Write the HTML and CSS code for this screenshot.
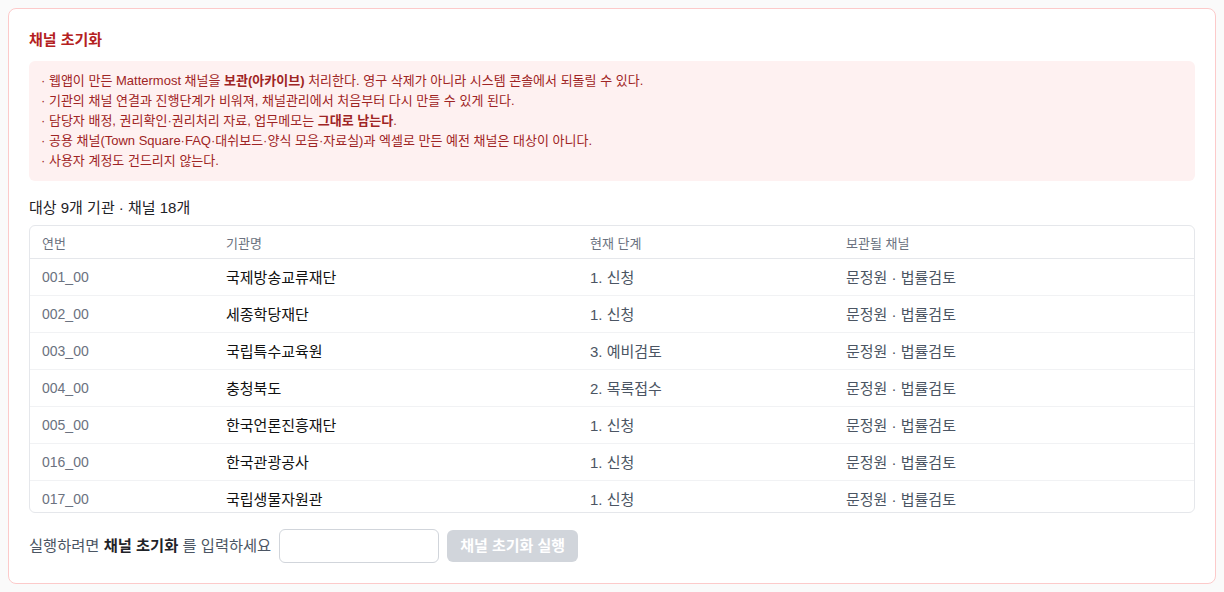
FILE: index.html
```html
<!DOCTYPE html>
<html lang="ko">
    <head>
        <meta charset="UTF-8">
        <meta name="viewport" content="width=device-width, initial-scale=1.0">
        <title>채널 초기화</title>
        <link rel="stylesheet" href="styles.css">
    </head>
    <body>
        <section class="reset-card">
            <h2 class="reset-title">채널 초기화</h2>

            <ul class="notice">
                <li>웹앱이 만든 Mattermost 채널을 <b>보관(아카이브)</b> 처리한다. 영구 삭제가 아니라 시스템 콘솔에서 되돌릴 수 있다.</li>
                <li>기관의 채널 연결과 진행단계가 비워져, 채널관리에서 처음부터 다시 만들 수 있게 된다.</li>
                <li>담당자 배정, 권리확인·권리처리 자료, 업무메모는 <b>그대로 남는다</b>.</li>
                <li>공용 채널(Town Square·FAQ·대쉬보드·양식 모음·자료실)과 엑셀로 만든 예전 채널은 대상이 아니다.</li>
                <li>사용자 계정도 건드리지 않는다.</li>
            </ul>

            <div class="summary">대상 9개 기관 · 채널 18개</div>

            <div class="table-wrap">
                <table class="targets">
                    <colgroup>
                        <col class="c-no">
                        <col class="c-org">
                        <col class="c-stage">
                        <col>
                    </colgroup>
                    <thead>
                        <tr>
                            <th>연번</th>
                            <th>기관명</th>
                            <th>현재 단계</th>
                            <th>보관될 채널</th>
                        </tr>
                    </thead>
                    <tbody>
                        <tr><td class="no">001_00</td><td class="org">국제방송교류재단</td><td>1. 신청</td><td>문정원 · 법률검토</td></tr>
                        <tr><td class="no">002_00</td><td class="org">세종학당재단</td><td>1. 신청</td><td>문정원 · 법률검토</td></tr>
                        <tr><td class="no">003_00</td><td class="org">국립특수교육원</td><td>3. 예비검토</td><td>문정원 · 법률검토</td></tr>
                        <tr><td class="no">004_00</td><td class="org">충청북도</td><td>2. 목록접수</td><td>문정원 · 법률검토</td></tr>
                        <tr><td class="no">005_00</td><td class="org">한국언론진흥재단</td><td>1. 신청</td><td>문정원 · 법률검토</td></tr>
                        <tr><td class="no">016_00</td><td class="org">한국관광공사</td><td>1. 신청</td><td>문정원 · 법률검토</td></tr>
                        <tr><td class="no">017_00</td><td class="org">국립생물자원관</td><td>1. 신청</td><td>문정원 · 법률검토</td></tr>
                        <tr><td class="no">018_00</td><td class="org">국립중앙과학관</td><td>1. 신청</td><td>문정원 · 법률검토</td></tr>
                        <tr><td class="no">021_00</td><td class="org">한국문화정보원</td><td>2. 목록접수</td><td>문정원 · 법률검토</td></tr>
                    </tbody>
                </table>
            </div>

            <div class="confirm-row">
                <span class="confirm-label">실행하려면 <b>채널 초기화</b> 를 입력하세요</span>
                <input class="confirm-input" type="text">
                <button class="run-btn" disabled>채널 초기화 실행</button>
            </div>
        </section>
    </body>
</html>
```

FILE: styles.css
```css
:root {
    --red-50: #fef1f1;
    --red-200: #fccaca;
    --red-700: #b42121;
    --red-800: #9e2424;
    --gray-100: #f1f2f4;
    --gray-200: #e5e7eb;
    --gray-300: #d1d5db;
    --gray-500: #6b7280;
    --gray-600: #4b5563;
    --ink: #1f2328;
}

body {
    margin: 8px;
    background-color: #fafafa;
    font-family: "Liberation Sans", "Noto Sans CJK KR", sans-serif;
    color: var(--ink);
}

.reset-card {
    height: 576px;
    box-sizing: border-box;
    padding: 20px;
    background-color: #fff;
    border: 1px solid var(--red-200);
    border-radius: 8px;
}

.reset-title {
    margin: 0 0 10px;
    font-size: 15px;
    line-height: 22px;
    font-weight: 700;
    color: var(--red-700);
}

.notice {
    list-style: none;
    margin: 0;
    padding: 10px 12px;
    background-color: var(--red-50);
    border-radius: 6px;
    color: var(--red-800);
    font-size: 13px;
    line-height: 20px;
}

.notice li::before {
    content: "· ";
}

.notice b {
    font-weight: 700;
}

.summary {
    margin: 16px 0 6px;
    font-size: 15px;
    line-height: 22px;
    font-weight: 400;
}

/* scrolls once the list is longer than seven rows */
.table-wrap {
    max-height: 288px;
    box-sizing: border-box;
    overflow-y: auto;
    scrollbar-width: none;
    border: 1px solid var(--gray-200);
    border-radius: 6px;
}

.targets {
    width: 100%;
    border-collapse: collapse;
    table-layout: fixed;
    font-size: 15px;
}

.c-no { width: 184px; }
.c-org { width: 364px; }
.c-stage { width: 256px; }

.targets th {
    height: 32px;
    padding: 0 12px;
    text-align: left;
    font-size: 13px;
    font-weight: 400;
    color: var(--gray-500);
    border-bottom: 1px solid var(--gray-200);
}

.targets td {
    height: 34px;
    padding: 0 12px 2px;
    color: var(--gray-600);
    border-bottom: 1px solid var(--gray-100);
}

.targets td.no {
    padding: 1px 12px 1px;
    font-size: 14px;
    color: var(--gray-500);
}

.targets td.org {
    color: #111;
    font-weight: 400;
}

.confirm-row {
    display: flex;
    align-items: center;
    gap: 8px;
    margin-top: 16px;
}

.confirm-label {
    font-size: 15.3px;
    line-height: 24px;
    color: var(--gray-600);
}

.confirm-label b {
    color: var(--ink);
    font-weight: 700;
}

.confirm-input {
    width: 160px;
    height: 34px;
    box-sizing: border-box;
    border: 1px solid var(--gray-300);
    border-radius: 6px;
    background: #fff;
}

.run-btn {
    height: 32px;
    padding: 0 13px;
    border: none;
    border-radius: 6px;
    background-color: var(--gray-300);
    color: #fff;
    font-family: inherit;
    font-size: 15px;
    line-height: 24px;
    font-weight: 600;
}
```
